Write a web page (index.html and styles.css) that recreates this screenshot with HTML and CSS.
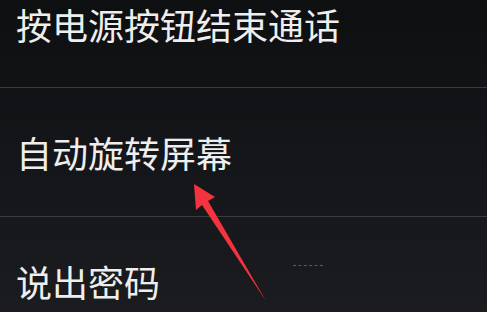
FILE: index.html
```html
<!DOCTYPE html>
<html lang="zh-CN">
<head>
    <meta charset="UTF-8">
    <meta name="viewport" content="width=device-width, initial-scale=1.0">
    <title>设置</title>
    <link rel="stylesheet" href="styles.css">
</head>
<body>
    <div class="screen">
        <ul class="settings-list">
            <li class="setting-item">按电源按钮结束通话</li>
            <li class="setting-item">自动旋转屏幕</li>
            <li class="setting-item">说出密码</li>
        </ul>

        <!-- annotation arrow over the list -->
        <svg class="arrow" width="487" height="312" viewBox="0 0 487 312">
            <polygon points="194,184 215,197 208,201 266,301 202,205 196,210" fill="#f3343e"/>
        </svg>
        <span class="dots"></span>
    </div>
</body>
</html>
```

FILE: styles.css
```css
* {
    box-sizing: border-box;
}

body {
    margin: 0;
    background: #101114;
    font-family: "Noto Sans CJK SC", "Noto Sans", sans-serif;
    overflow: hidden;
}

.screen {
    position: relative;
    width: 487px;
    height: 312px;
    overflow: hidden;
    background: linear-gradient(180deg, #0e0f11 0%, #141518 45%, #1b1c1f 100%);
}

.settings-list {
    list-style: none;
    margin: 0;
    padding: 0;
}

.setting-item {
    display: flex;
    align-items: center;
    height: 129px;
    padding-left: 16px;
    border-bottom: 1px solid #3b3c3e;
    color: #eeeeee;
    font-size: 36px;
    line-height: 36px;
}

/* top row is scrolled partly out of view */
.setting-item:first-child {
    height: 88px;
    padding-bottom: 40px;
}

.arrow {
    position: absolute;
    top: 0;
    left: 0;
}

.dots {
    position: absolute;
    left: 293px;
    top: 265px;
    width: 30px;
    border-top: 1px dashed #5a5b5e;
}
```
